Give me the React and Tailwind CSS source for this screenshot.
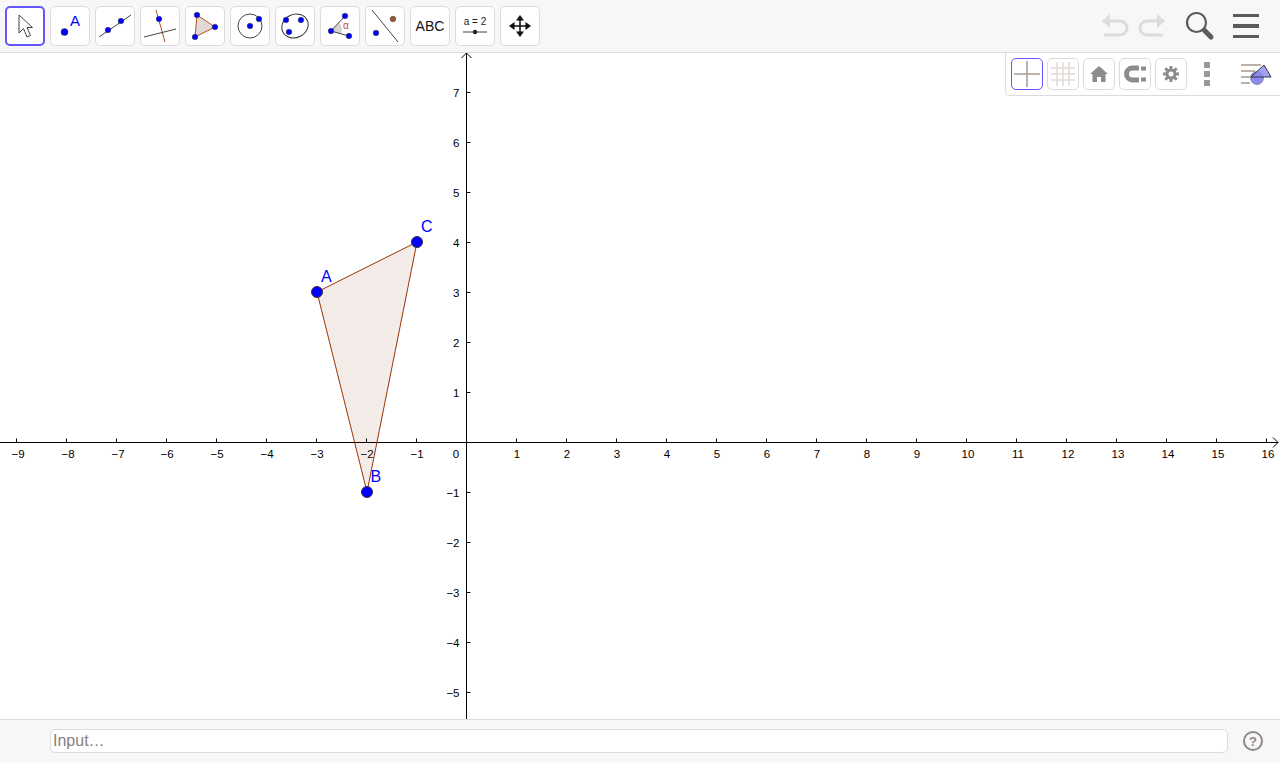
import React from 'react';

const X_LABELS = [-9, -8, -7, -6, -5, -4, -3, -2, -1, 1, 2, 3, 4, 5, 6, 7, 8, 9, 10, 11, 12, 13, 14, 15, 16];
const Y_LABELS = [7, 6, 5, 4, 3, 2, 1, -1, -2, -3, -4, -5];

const fmt = n => (n < 0 ? `\u2212${-n}` : `${n}`);

function Dot({ x, y, r = 2.8, fill = '#0000ff' }) {
  return <circle cx={x} cy={y} r={r} fill={fill} stroke="#333" strokeWidth="0.5" />;
}

// each tool icon is drawn in a 40x40 box
const TOOLS = [
  {
    key: 'move',
    active: true,
    icon: <path d="M14 9V27L18.500 22.500L22 31L25.500 29.500L22 21.500H27.500Z" fill="#fff" stroke="#444" strokeWidth="1" strokeLinejoin="round" />,
  },
  {
    key: 'point',
    icon: (
      <>
        <circle cx="14.500" cy="26" r="3.500" fill="#0000ff" stroke="#333" strokeWidth="0.5" />
        <text x="25" y="20" textAnchor="middle" fontSize="15" fill="#0000ff">A</text>
      </>
    ),
  },
  {
    key: 'line',
    icon: (
      <>
        <line x1="4" y1="31" x2="36" y2="9" stroke="#444" />
        <Dot x={13} y={24} />
        <Dot x={26} y={15} />
      </>
    ),
  },
  {
    key: 'perp',
    icon: (
      <>
        <line x1="16" y1="4" x2="25" y2="36" stroke="#b5502a" />
        <line x1="4" y1="31" x2="36" y2="23" stroke="#444" />
        <Dot x={19} y={13} />
      </>
    ),
  },
  {
    key: 'polygon',
    icon: (
      <>
        <polygon points="12,9 30,21 10,31" fill="#e2d9d4" stroke="#b5502a" />
        <Dot x={12} y={9} />
        <Dot x={30} y={21} />
        <Dot x={10} y={31} />
      </>
    ),
  },
  {
    key: 'circle',
    icon: (
      <>
        <circle cx="20" cy="20" r="12" fill="none" stroke="#444" />
        <Dot x={20} y={20} />
        <Dot x={29} y={13} />
      </>
    ),
  },
  {
    key: 'conic',
    icon: (
      <>
        <ellipse cx="20" cy="20" rx="13.500" ry="11.500" transform="rotate(-25 20 20)" fill="none" stroke="#333" />
        <Dot x={11} y={14} />
        <Dot x={26} y={14} />
        <Dot x={14} y={26} />
      </>
    ),
  },
  {
    key: 'angle',
    icon: (
      <>
        <path d="M11 25L19 16.500A11 11 0 0 1 21 28z" fill="#d8d2ce" />
        <polyline points="25,10 11,25 29,30" fill="none" stroke="#444" />
        <Dot x={25} y={10} />
        <Dot x={11} y={25} />
        <Dot x={29} y={30} />
        <text x="26" y="23" textAnchor="middle" fontSize="10" fill="#b5502a">α</text>
      </>
    ),
  },
  {
    key: 'reflect',
    icon: (
      <>
        <line x1="7" y1="4" x2="33" y2="36" stroke="#444" />
        <Dot x={11} y={27} />
        <Dot x={28} y={13} fill="#a0522d" />
      </>
    ),
  },
  {
    key: 'text',
    icon: <text x="20" y="25" textAnchor="middle" fontSize="14" fill="#111">ABC</text>,
  },
  {
    key: 'slider',
    icon: (
      <>
        <text x="20" y="19" textAnchor="middle" fontSize="10" fill="#222">a = 2</text>
        <line x1="8" y1="26" x2="32" y2="26" stroke="#8a7f78" strokeWidth="1.500" />
        <circle cx="20" cy="26" r="2.200" fill="#222" />
      </>
    ),
  },
  {
    key: 'moveview',
    icon: (
      <>
        <path d="M20 12v16M12 20h16" stroke="#111" strokeWidth="1.500" />
        <path d="M20 9l4 5.500h-8zM20 31l4-5.500h-8zM9 20l5.500-4v8zM31 20l-5.500-4v8z" fill="#111" />
      </>
    ),
  },
];

function ToolButton({ tool }) {
  const cls = tool.active
    ? 'w-10 h-10 bg-white rounded-[5px] border-2 border-[#6557ff]'
    : 'w-10 h-10 bg-white rounded-[5px] border border-[#dcdcdc]';
  return (
    <div className={cls}>
      <svg
        width="40"
        height="40"
        viewBox="0 0 40 40"
        className={tool.active ? '-m-[2px]' : '-m-px'}
      >
        {tool.icon}
      </svg>
    </div>
  );
}

function StyleBtn({ active, children }) {
  return (
    <div className={`w-8 h-8 rounded-[5px] border ${active ? 'border-[#6557ff]' : 'border-[#dcdcdc]'}`}>
      <svg width="32" height="32" viewBox="0 0 32 32" className="-m-px">{children}</svg>
    </div>
  );
}

function StyleBar() {
  return (
    <div className="absolute top-0 right-0 w-[275px] h-[43px] bg-white border-l border-b border-[#dcdcdc] rounded-bl-[5px] flex items-start pt-[5px] pl-[5px] gap-1">
      <StyleBtn active>
        <path d="M16 3v26M3 16h26" stroke="#a89a90" strokeWidth="1.500" />
      </StyleBtn>
      <StyleBtn>
        <path d="M10 4v24M16 4v24M22 4v24M4 10h24M4 16h24M4 22h24" stroke="#dedad7" strokeWidth="1.500" />
      </StyleBtn>
      <StyleBtn>
        <path d="M16 8l9 8h-2.500v8h-4.500v-5h-4v5h-4.500v-8H7z" fill="#8c8c8c" />
      </StyleBtn>
      <StyleBtn>
        <path d="M20 7.500h-6.500a8.500 8.500 0 0 0 0 17H20v-5h-6.500a3.500 3.500 0 0 1 0-7H20z" fill="#8c8c8c" />
        <path d="M22 8.500h5v4h-5zM22 19.500h5v4h-5z" fill="#8c8c8c" />
      </StyleBtn>
      <StyleBtn>
        <path d="M16 8v16M8 16h16M10.300 10.300l11.400 11.400M21.700 10.300L10.300 21.700" stroke="#8c8c8c" strokeWidth="3" />
        <circle cx="16" cy="16" r="5.500" fill="#8c8c8c" />
        <circle cx="16" cy="16" r="2.500" fill="#fff" />
      </StyleBtn>
      <div className="w-8 h-8 flex flex-col items-center justify-center gap-[3px]">
        <div className="w-[6px] h-[6px] bg-[#999]" />
        <div className="w-[6px] h-[6px] bg-[#999]" />
        <div className="w-[6px] h-[6px] bg-[#999]" />
      </div>
      <svg width="36" height="32" viewBox="0 0 36 32" className="ml-[14px]">
        <path d="M0 7h20M0 13h14M0 19h9M0 25h9" stroke="#a89a90" strokeWidth="1.500" />
        <circle cx="16" cy="20" r="6.500" fill="#8c8cf0" stroke="#555" strokeWidth="0.500" />
        <polygon points="23,7 30,19 10,19" fill="#8c8cf0" fillOpacity="0.8" stroke="#333" />
      </svg>
    </div>
  );
}

function Graph() {
  return (
    <svg className="w-[1280px] h-[666px] block" viewBox="0 53 1280 666">
      {/* axes */}
      <line x1="0" y1="442.500" x2="1278" y2="442.500" stroke="#000" />
      <line x1="466.500" y1="53" x2="466.500" y2="719" stroke="#000" />
      <path d="M1273 437.500l5 5-5 5" fill="none" stroke="#000" />
      <path d="M461.500 58l5-5 5 5" fill="none" stroke="#000" />
      {X_LABELS.map(n => {
        const x = 466.5 + n * 50;
        const nudge = n >= 10 || n < -6 ? 1.5 : 0.5;
        return (
          <g key={n}>
            <line x1={x} y1="438.500" x2={x} y2="442.500" stroke="#000" />
            <text x={x + nudge} y="458" textAnchor="middle" fontSize="11.500" fill="#000">{fmt(n)}</text>
          </g>
        );
      })}
      <text x="456" y="458" textAnchor="middle" fontSize="11.500" fill="#000">0</text>
      {Y_LABELS.map(n => {
        const y = 442.5 - n * 50;
        return (
          <g key={n}>
            <line x1="466.500" y1={y} x2="470.500" y2={y} stroke="#000" />
            <text x="459.500" y={y + 4} textAnchor="end" fontSize="11.500" fill="#000">{fmt(n)}</text>
          </g>
        );
      })}
      {/* triangle ABC */}
      <polygon points="317,292 367,492 417,242" fill="#8a4020" fillOpacity="0.1" stroke="#993300" strokeWidth="1" />
      <circle cx="317" cy="292" r="5.500" fill="#0000ff" stroke="#333" />
      <circle cx="367" cy="492" r="5.500" fill="#0000ff" stroke="#333" />
      <circle cx="417" cy="242" r="5.500" fill="#0000ff" stroke="#333" />
      <text x="321" y="282" fontSize="16" fill="#0000ff">A</text>
      <text x="370.500" y="482" fontSize="16" fill="#0000ff">B</text>
      <text x="421" y="232" fontSize="16" fill="#0000ff">C</text>
    </svg>
  );
}

export default function App() {
  return (
    <div className="w-[1280px] h-[764px] overflow-hidden flex flex-col bg-white font-['Liberation_Sans',Arial,sans-serif]">
      <header className="h-[53px] shrink-0 bg-[#f7f7f7] border-b border-[#dcdcdc] flex items-start pt-[6px] pl-[5px] pr-[21px]">
        <div className="flex gap-[5px]">
          {TOOLS.map(t => <ToolButton key={t.key} tool={t} />)}
        </div>
        <div className="ml-auto flex items-center h-10">
          <svg width="30" height="28" viewBox="0 0 30 28">
            <path d="M3 9h17a6.500 6.500 0 0 1 0 14H4" fill="none" stroke="#dcdcdc" strokeWidth="3" />
            <path d="M10 2L2 9l8 7z" fill="#dcdcdc" />
          </svg>
          <svg width="30" height="28" viewBox="0 0 30 28" className="ml-[7px]">
            <path d="M27 9H10a6.500 6.500 0 0 0 0 14h16" fill="none" stroke="#dcdcdc" strokeWidth="3" />
            <path d="M20 2l8 7-8 7z" fill="#dcdcdc" />
          </svg>
          <svg width="30" height="30" viewBox="0 0 30 30" className="ml-[18px]">
            <circle cx="11.500" cy="11.500" r="9.500" fill="none" stroke="#5e5a58" strokeWidth="2.200" />
            <path d="M19.500 19.500l6.500 6.500" stroke="#5e5a58" strokeWidth="5" strokeLinecap="round" />
          </svg>
          <div className="ml-[18px] w-[26px] flex flex-col gap-[7px]">
            <div className="h-[3.5px] bg-[#5e5a58]" />
            <div className="h-[3.5px] bg-[#5e5a58]" />
            <div className="h-[3.5px] bg-[#5e5a58]" />
          </div>
        </div>
      </header>

      <main className="relative h-[666px] shrink-0">
        <Graph />
        <StyleBar />
      </main>

      <footer className="h-[44px] shrink-0 bg-[#f7f7f7] border-t border-[#dcdcdc] flex items-center pl-[50px] pr-[15px] pb-[1px]">
        <input
          placeholder="Input…"
          className="w-[1178px] h-[24px] bg-white border border-[#dcdcdc] rounded-[5px] px-[2px] text-base outline-none placeholder:text-[#85807c]"
        />
        <svg width="22" height="22" viewBox="0 0 22 22" className="ml-[14px]">
          <circle cx="11" cy="11" r="9" fill="none" stroke="#8f8a86" strokeWidth="2" />
          <text x="11" y="15.500" textAnchor="middle" fontSize="13" fontWeight="700" fill="#8f8a86">?</text>
        </svg>
      </footer>
    </div>
  );
}
